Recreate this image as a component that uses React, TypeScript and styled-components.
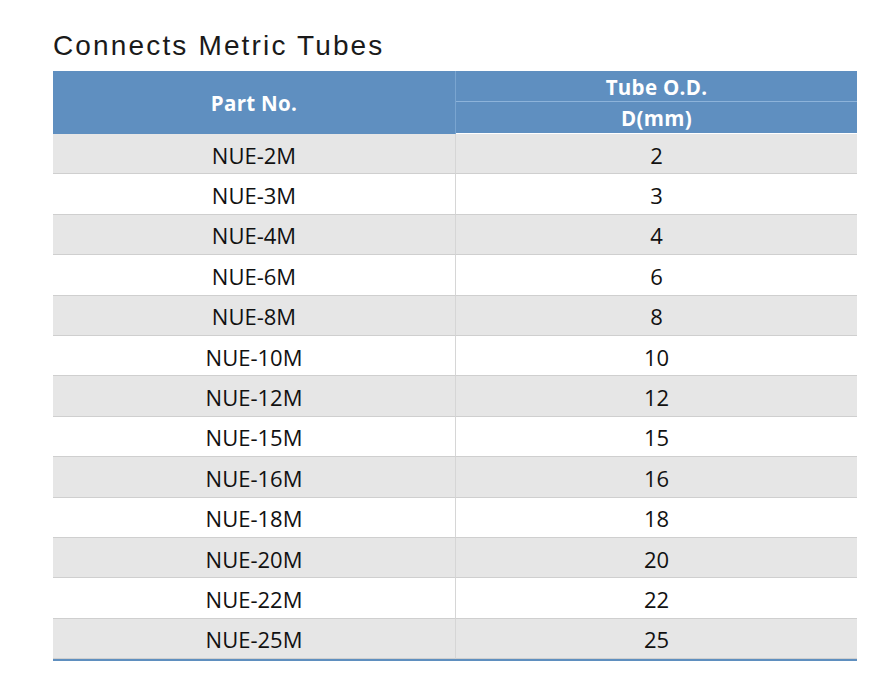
import React from "react";
import styled, { createGlobalStyle } from "styled-components";

const Global = createGlobalStyle`
  html, body { margin: 0; padding: 0; background: #ffffff; }
  body { font-family: "Liberation Sans", Arial, sans-serif; }
`;

const Page = styled.div`
  width: 896px;
  height: 694px;
  box-sizing: border-box;
  padding: 29px 39px 0 53px;
  background: #fff;
`;

const Title = styled.h1`
  margin: 0 0 8px 0;
  font-family: "Liberation Sans", Arial, sans-serif;
  font-weight: 400;
  font-size: 28px;
  line-height: 34px;
  letter-spacing: 2.15px;
  color: #1a1a1a;
`;

const Table = styled.div`
  width: 804px;
  display: grid;
  grid-template-columns: 402px 402px;
  border-bottom: 2px solid #5f8fbf;
`;

const HeadCell = styled.div<{ $tall?: boolean }>`
  background: #5f8fc0;
  color: #fff;
  font-family: "Open Sans", sans-serif;
  font-weight: 700;
  font-size: 20.5px;
  letter-spacing: 0.3px;
  display: flex;
  align-items: center;
  justify-content: center;
  height: ${(p) => (p.$tall ? "63px" : "31px")};
`;

const HeadStack = styled.div`
  display: grid;
  grid-template-rows: 30px 1px 32px;
  border-left: 1px solid #7aa5d0;
`;

const HeadLine = styled.div`
  background: #8db3da;
`;

const Cell = styled.div<{ $alt: boolean; $right?: boolean }>`
  height: 40.4px;
  box-sizing: border-box;
  background: ${(p) => (p.$alt ? "#e6e6e6" : "#ffffff")};
  border-bottom: 1px solid #cfcfcf;
  ${(p) => (p.$right ? "border-left: 1px solid #d6d6d6;" : "")}
  display: flex;
  align-items: center;
  justify-content: center;
  padding-top: 2px;
  font-family: "Open Sans", sans-serif;
  font-size: 22px;
  color: #111;
  letter-spacing: 0px;
`;

const rows = [
  ["NUE-2M", "2"],
  ["NUE-3M", "3"],
  ["NUE-4M", "4"],
  ["NUE-6M", "6"],
  ["NUE-8M", "8"],
  ["NUE-10M", "10"],
  ["NUE-12M", "12"],
  ["NUE-15M", "15"],
  ["NUE-16M", "16"],
  ["NUE-18M", "18"],
  ["NUE-20M", "20"],
  ["NUE-22M", "22"],
  ["NUE-25M", "25"],
];

export default function App() {
  return (
    <Page>
      <Global />
      <Title>Connects Metric Tubes</Title>
      <Table>
        <HeadCell $tall>Part No.</HeadCell>
        <HeadStack>
          <HeadCell>Tube O.D.</HeadCell>
          <HeadLine />
          <HeadCell>D(mm)</HeadCell>
        </HeadStack>
        {rows.map(([a, b], i) => (
          <React.Fragment key={a}>
            <Cell $alt={i % 2 === 0}>{a}</Cell>
            <Cell $alt={i % 2 === 0} $right>
              {b}
            </Cell>
          </React.Fragment>
        ))}
      </Table>
    </Page>
  );
}
